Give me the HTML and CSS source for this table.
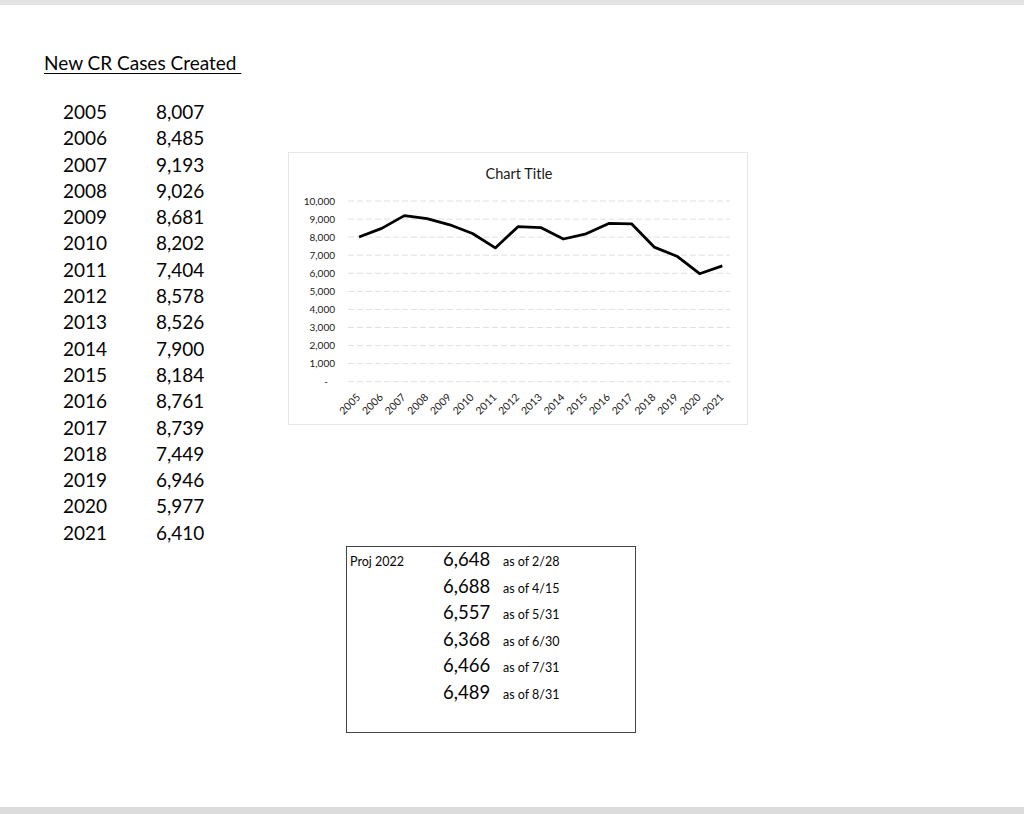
FILE: index.html
```html
<!DOCTYPE html>
<html>
<head>
<meta charset="utf-8">
<link rel="stylesheet" href="styles.css">
</head>
<body>
<div class="sheet">
  <div class="content">
    <div class="left">
      <div class="title">New CR Cases Created&nbsp;</div>
      <div class="table">
        <div class="row"><span class="yr">2005</span><span class="val">8,007</span></div>
        <div class="row"><span class="yr">2006</span><span class="val">8,485</span></div>
        <div class="row"><span class="yr">2007</span><span class="val">9,193</span></div>
        <div class="row"><span class="yr">2008</span><span class="val">9,026</span></div>
        <div class="row"><span class="yr">2009</span><span class="val">8,681</span></div>
        <div class="row"><span class="yr">2010</span><span class="val">8,202</span></div>
        <div class="row"><span class="yr">2011</span><span class="val">7,404</span></div>
        <div class="row"><span class="yr">2012</span><span class="val">8,578</span></div>
        <div class="row"><span class="yr">2013</span><span class="val">8,526</span></div>
        <div class="row"><span class="yr">2014</span><span class="val">7,900</span></div>
        <div class="row"><span class="yr">2015</span><span class="val">8,184</span></div>
        <div class="row"><span class="yr">2016</span><span class="val">8,761</span></div>
        <div class="row"><span class="yr">2017</span><span class="val">8,739</span></div>
        <div class="row"><span class="yr">2018</span><span class="val">7,449</span></div>
        <div class="row"><span class="yr">2019</span><span class="val">6,946</span></div>
        <div class="row"><span class="yr">2020</span><span class="val">5,977</span></div>
        <div class="row"><span class="yr">2021</span><span class="val">6,410</span></div>
      </div>
    </div>
    <div class="right">
      <div class="chart">
        <svg width="460" height="273" viewBox="0 0 460 273" xmlns="http://www.w3.org/2000/svg">
          <text x="231" y="27" class="ctitle" text-anchor="middle">Chart Title</text>
          <g class="grid">
            <line x1="60" x2="442" y1="49" y2="49"/>
            <line x1="60" x2="442" y1="67.1" y2="67.1"/>
            <line x1="60" x2="442" y1="85.1" y2="85.1"/>
            <line x1="60" x2="442" y1="103.2" y2="103.2"/>
            <line x1="60" x2="442" y1="121.3" y2="121.3"/>
            <line x1="60" x2="442" y1="139.4" y2="139.4"/>
            <line x1="60" x2="442" y1="157.4" y2="157.4"/>
            <line x1="60" x2="442" y1="175.5" y2="175.5"/>
            <line x1="60" x2="442" y1="193.6" y2="193.6"/>
            <line x1="60" x2="442" y1="211.6" y2="211.6"/>
            <line x1="60" x2="442" y1="229.7" y2="229.7"/>
          </g>
          <g class="ylab" text-anchor="end">
            <text x="47" y="52.5">10,000</text>
            <text x="47" y="70.6">9,000</text>
            <text x="47" y="88.6">8,000</text>
            <text x="47" y="106.7">7,000</text>
            <text x="47" y="124.8">6,000</text>
            <text x="47" y="142.9">5,000</text>
            <text x="47" y="160.9">4,000</text>
            <text x="47" y="179">3,000</text>
            <text x="47" y="197.1">2,000</text>
            <text x="47" y="215.1">1,000</text>
            <text x="40" y="233.2">-</text>
          </g>
          <polyline class="line" points="71,85 93.7,76.4 116.4,63.6 139.1,66.6 161.8,72.8 184.5,81.5 207.3,95.9 230,74.7 252.7,75.6 275.4,87 298.1,81.8 320.8,71.4 343.5,71.8 366.2,95.1 388.9,104.2 411.6,121.7 434.3,113.9"/>
          <g class="xlab" text-anchor="end">
            <text transform="translate(73,246) rotate(-45)">2005</text>
            <text transform="translate(95.7,246) rotate(-45)">2006</text>
            <text transform="translate(118.4,246) rotate(-45)">2007</text>
            <text transform="translate(141.1,246) rotate(-45)">2008</text>
            <text transform="translate(163.8,246) rotate(-45)">2009</text>
            <text transform="translate(186.5,246) rotate(-45)">2010</text>
            <text transform="translate(209.3,246) rotate(-45)">2011</text>
            <text transform="translate(232,246) rotate(-45)">2012</text>
            <text transform="translate(254.7,246) rotate(-45)">2013</text>
            <text transform="translate(277.4,246) rotate(-45)">2014</text>
            <text transform="translate(300.1,246) rotate(-45)">2015</text>
            <text transform="translate(322.8,246) rotate(-45)">2016</text>
            <text transform="translate(345.5,246) rotate(-45)">2017</text>
            <text transform="translate(368.2,246) rotate(-45)">2018</text>
            <text transform="translate(390.9,246) rotate(-45)">2019</text>
            <text transform="translate(413.6,246) rotate(-45)">2020</text>
            <text transform="translate(436.3,246) rotate(-45)">2021</text>
          </g>
        </svg>
      </div>
      <div class="proj">
        <div class="prow"><span class="plabel">Proj 2022</span><span class="pnum">6,648</span><span class="pdate">as of 2/28</span></div>
        <div class="prow"><span class="plabel"></span><span class="pnum">6,688</span><span class="pdate">as of 4/15</span></div>
        <div class="prow"><span class="plabel"></span><span class="pnum">6,557</span><span class="pdate">as of 5/31</span></div>
        <div class="prow"><span class="plabel"></span><span class="pnum">6,368</span><span class="pdate">as of 6/30</span></div>
        <div class="prow"><span class="plabel"></span><span class="pnum">6,466</span><span class="pdate">as of 7/31</span></div>
        <div class="prow"><span class="plabel"></span><span class="pnum">6,489</span><span class="pdate">as of 8/31</span></div>
      </div>
    </div>
  </div>
</div>
</body>
</html>
```

FILE: styles.css
```css
html, body {
  margin: 0;
  padding: 0;
  background: #ffffff;
}
body {
  font-family: Lato, "Noto Sans", sans-serif;
  color: #050505;
}
.sheet {
  box-sizing: border-box;
  width: 1024px;
  height: 814px;
  border-top: 5px solid #e3e3e3;
  border-bottom: 7px solid #dcdcdc;
  background: #fff;
  overflow: hidden;
}
.content {
  display: flex;
  padding-top: 46px;
  padding-left: 44px;
}
.left {
  width: 244px;
  flex: none;
}
.title {
  font-size: 19px;
  line-height: 24px;
  text-decoration: underline;
  text-underline-offset: 3px;
  text-decoration-thickness: 1px;
  display: inline-block;
  white-space: pre;
}
.table {
  margin-top: 24px;
  padding-left: 19px;
}
.row {
  display: flex;
  font-size: 19px;
  line-height: 26.3px;
}
.yr {
  width: 93px;
}
.right {
  display: flex;
  flex-direction: column;
  align-items: flex-start;
}
.chart {
  margin-top: 101px;
  width: 460px;
  height: 273px;
  box-sizing: border-box;
  border: 1px solid #e6e6e6;
}
.chart svg {
  display: block;
  margin: -1px;
}
.ctitle {
  font-family: Lato, sans-serif;
  font-size: 14.5px;
  fill: #1a1a1a;
}
.grid line {
  stroke: #e0e0e0;
  stroke-width: 1;
  stroke-dasharray: 6 3;
}
.ylab text {
  font-family: Lato, sans-serif;
  font-size: 10px;
  fill: #1a1a1a;
}
.xlab text {
  font-family: Lato, sans-serif;
  font-size: 10.5px;
  fill: #1a1a1a;
}
.line {
  fill: none;
  stroke: #000;
  stroke-width: 2.8;
  stroke-linejoin: round;
}
.proj {
  margin-top: 121px;
  margin-left: 58px;
  width: 290px;
  height: 187px;
  box-sizing: border-box;
  border: 1px solid #444;
  padding-left: 3px;
}
.prow {
  display: flex;
  align-items: baseline;
  height: 26.6px;
  line-height: 24px;
}
.plabel {
  width: 93px;
  font-size: 12.5px;
}
.pnum {
  width: 60px;
  font-size: 18.5px;
}
.pdate {
  font-size: 12.5px;
}
```
